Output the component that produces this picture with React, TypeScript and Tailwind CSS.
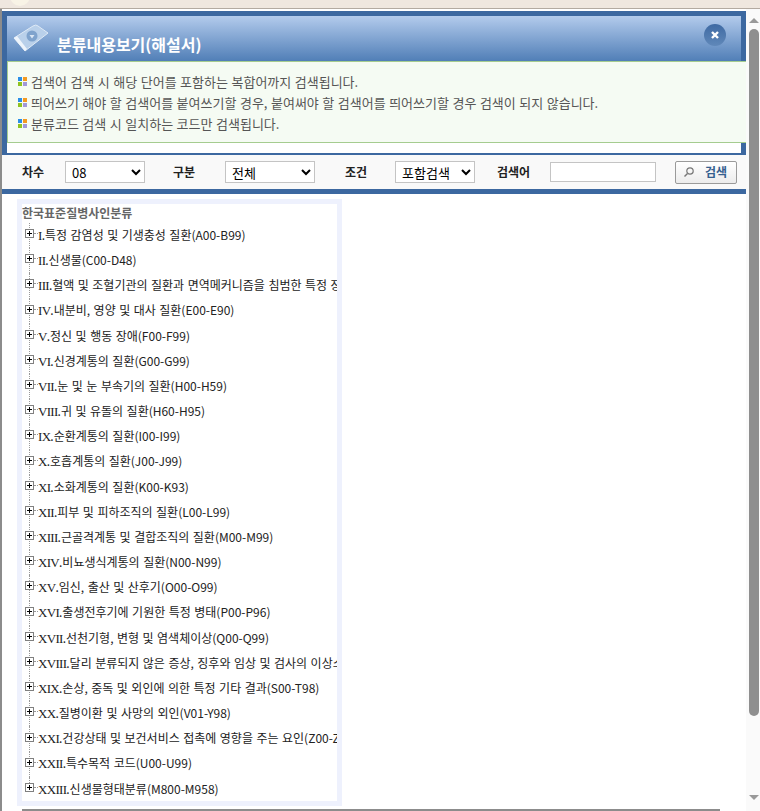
const rows: [string, string][] = [
  ["I", "특정 감염성 및 기생충성 질환(A00-B99)"],
  ["II", "신생물(C00-D48)"],
  ["III", "혈액 및 조혈기관의 질환과 면역메커니즘을 침범한 특정 장애(D50-D89)"],
  ["IV", "내분비, 영양 및 대사 질환(E00-E90)"],
  ["V", "정신 및 행동 장애(F00-F99)"],
  ["VI", "신경계통의 질환(G00-G99)"],
  ["VII", "눈 및 눈 부속기의 질환(H00-H59)"],
  ["VIII", "귀 및 유돌의 질환(H60-H95)"],
  ["IX", "순환계통의 질환(I00-I99)"],
  ["X", "호흡계통의 질환(J00-J99)"],
  ["XI", "소화계통의 질환(K00-K93)"],
  ["XII", "피부 및 피하조직의 질환(L00-L99)"],
  ["XIII", "근골격계통 및 결합조직의 질환(M00-M99)"],
  ["XIV", "비뇨생식계통의 질환(N00-N99)"],
  ["XV", "임신, 출산 및 산후기(O00-O99)"],
  ["XVI", "출생전후기에 기원한 특정 병태(P00-P96)"],
  ["XVII", "선천기형, 변형 및 염색체이상(Q00-Q99)"],
  ["XVIII", "달리 분류되지 않은 증상, 징후와 임상 및 검사의 이상소견(R00-R99)"],
  ["XIX", "손상, 중독 및 외인에 의한 특정 기타 결과(S00-T98)"],
  ["XX", "질병이환 및 사망의 외인(V01-Y98)"],
  ["XXI", "건강상태 및 보건서비스 접촉에 영향을 주는 요인(Z00-Z99)"],
  ["XXII", "특수목적 코드(U00-U99)"],
  ["XXIII", "신생물형태분류(M800-M958)"],
];

function Bullet() {
  return (
    <svg width="9" height="9" viewBox="0 0 9 9" className="shrink-0">
      <rect x="0" y="0" width="4" height="4" fill="#2b8fe8" />
      <rect x="5" y="0" width="4" height="4" fill="#f39a1f" />
      <rect x="0" y="5" width="4" height="4" fill="#8fc31f" />
      <rect x="5" y="5" width="4" height="4" fill="#a198d8" />
    </svg>
  );
}

function Plus() {
  return (
    <svg width="9" height="9" viewBox="0 0 9 9" className="block shrink-0">
      <rect x="0.5" y="0.5" width="8" height="8" fill="#fff" stroke="#808080" />
      <path d="M2 4.5H7M4.5 2V7" stroke="#000" />
    </svg>
  );
}

const selectCls =
  "h-[22px] border border-[#c4c4c4] bg-white pl-[2px] text-[13px] text-black outline-none";

export default function App() {
  return (
    <div className="h-[811px] w-[760px] overflow-hidden bg-white font-['Noto_Sans_CJK_KR',sans-serif]">
      <div className="h-[9px] overflow-hidden border-b border-[#b3aaa1] bg-[#efe7df] pl-[10px]">
        <div className="mt-[-14px] h-[20px] w-[20px] rounded-full bg-[#f8f3e6]" />
      </div>
      <div className="flex h-[802px]">
        <div className="flex w-[746px] flex-col border-l-2 border-[#8c8c8c] pt-[2px]">
          <div className="border-x-[5px] border-t-[5px] border-[#3c68a0]">
            <div className="flex h-[45px] items-center bg-gradient-to-b from-[#b3cbec] to-[#517fb7]">
              <svg width="36" height="30" viewBox="0 0 36 30" className="ml-[6px] mt-[-2px] shrink-0">
                <path d="M1 15 L20 3 Q23 1 25 3 L35 10 L12 28 Z" fill="#b9d0ea" stroke="#dfeaf6" />
                <path d="M1 15 L12 28 L14 26 L4 13 Z" fill="#eef4fb" />
                <circle cx="19" cy="13" r="5.5" fill="#7fa3cd" />
                <path d="M16.5 12 L19 15.5 L21.5 12 Z" fill="#dbe7f4" />
              </svg>
              <h1 className="ml-[8px] mt-[11px] text-[16px] leading-none font-bold text-white">분류내용보기(해설서)</h1>
              <div className="mb-[8px] ml-auto mr-[15px] flex h-[22px] w-[22px] items-center justify-center rounded-full bg-gradient-to-b from-[#3f6aa3] to-[#6088b9]">
                <svg width="10" height="10" viewBox="0 0 10 10">
                  <path d="M2 2L8 8M8 2L2 8" stroke="#fff" strokeWidth="2.4" />
                </svg>
              </div>
            </div>
          </div>
          <div className="border-l-[5px] border-[#3c68a0]">
            <div className="flex h-[82px] flex-col justify-center gap-[5px] border-y border-l border-[#a5cc8f] bg-[#f5fbf3] pl-[10px] pt-[1px] text-[13px] leading-[16px] text-[#555] [word-spacing:0.6px]">
              {[
                "검색어 검색 시 해당 단어를 포함하는 복합어까지 검색됩니다.",
                "띄어쓰기 해야 할 검색어를 붙여쓰기할 경우, 붙여써야 할 검색어를 띄어쓰기할 경우 검색이 되지 않습니다.",
                "분류코드 검색 시 일치하는 코드만 검색됩니다.",
              ].map((t) => (
                <div key={t} className="flex items-center gap-[4px]">
                  <Bullet />
                  <span>{t}</span>
                </div>
              ))}
            </div>
          </div>
          <div className="flex">
            <div className="h-[10px] w-[5px] bg-[#3c68a0]" />
            <div className="h-[10px] flex-1 bg-white" />
            <div className="h-[10px] w-[5px] bg-[#3c68a0]" />
          </div>
          <div className="flex h-[41px] items-center border-t-2 border-b-[5px] border-[#3c68a0] bg-[#f9f9f9] pl-[20px] text-[12px] font-bold text-[#222]">
            <span className="w-[43px]">차수</span>
            <select className={selectCls + " w-[80px] font-normal"} defaultValue="08">
              <option>08</option>
            </select>
            <span className="ml-[28px] w-[52px]">구분</span>
            <select className={selectCls + " w-[90px] font-normal"} defaultValue="전체">
              <option>전체</option>
            </select>
            <span className="ml-[30px] w-[50px]">조건</span>
            <select className={selectCls + " w-[80px] font-normal"} defaultValue="포함검색">
              <option>포함검색</option>
            </select>
            <span className="ml-[22px] w-[53px]">검색어</span>
            <input className="h-[20px] w-[106px] border border-[#c4c4c4] bg-white outline-none" />
            <button className="ml-[19px] flex h-[23px] w-[62px] items-center rounded-[2px] border border-[#9a9a9a] bg-gradient-to-b from-white to-[#ececec] pl-[7px] text-[#35608f]">
              <svg width="12" height="12" viewBox="0 0 12 12" className="shrink-0">
                <circle cx="7" cy="5" r="3.2" fill="none" stroke="#777" strokeWidth="1.2" />
                <path d="M4.5 7.5L1.5 10.5" stroke="#777" strokeWidth="1.4" />
              </svg>
              <span className="ml-[10px]">검색</span>
            </button>
          </div>
          <div className="mt-[5px] ml-[15px] h-[607px] w-[325px] border-[5px] border-[#eef1fd] bg-white">
            <div className="h-[597px] overflow-hidden text-nowrap">
              <div className="h-[19px] text-[12px] leading-[18px] font-semibold text-[#666]">한국표준질병사인분류</div>
              {rows.map(([num, text], i) => (
                <div
                  key={num}
                  className="relative flex h-[25.18px] items-center pl-[3px] text-[12px] text-[#222] [word-spacing:0.8px]"
                >
                  <span
                    className={
                      i === rows.length - 1
                        ? "absolute top-0 left-[7px] h-[8px] border-l border-dotted border-[#999]"
                        : "absolute top-0 bottom-0 left-[7px] border-l border-dotted border-[#999]"
                    }
                  />
                  <span className="relative mt-[-4px] shrink-0">
                    <Plus />
                  </span>
                  <span className="mt-[-4px] w-[4px] shrink-0 border-t border-dotted border-[#999]" />
                  <span className="shrink-0">
                    <span className="font-['Liberation_Serif',serif] text-[13px] tracking-[-0.7px]">{num}</span>.{text}
                  </span>
                </div>
              ))}
            </div>
          </div>
          <div className="mt-[3px] h-[2px] w-[698px] ml-[20px] bg-[#8c8c8c]" />
        </div>
        <div className="relative w-[14px] bg-[#fafafa]">
          <div className="absolute top-[9px] left-[3px] h-0 w-0 border-x-[5px] border-b-[5px] border-x-transparent border-b-[#999]" />
          <div className="absolute top-[20px] left-[3px] h-[687px] w-[10px] rounded-full bg-[#8f8f8f]" />
          <div className="absolute top-[786px] left-[3px] h-0 w-0 border-x-[5px] border-t-[5px] border-x-transparent border-t-[#999]" />
        </div>
      </div>
    </div>
  );
}
